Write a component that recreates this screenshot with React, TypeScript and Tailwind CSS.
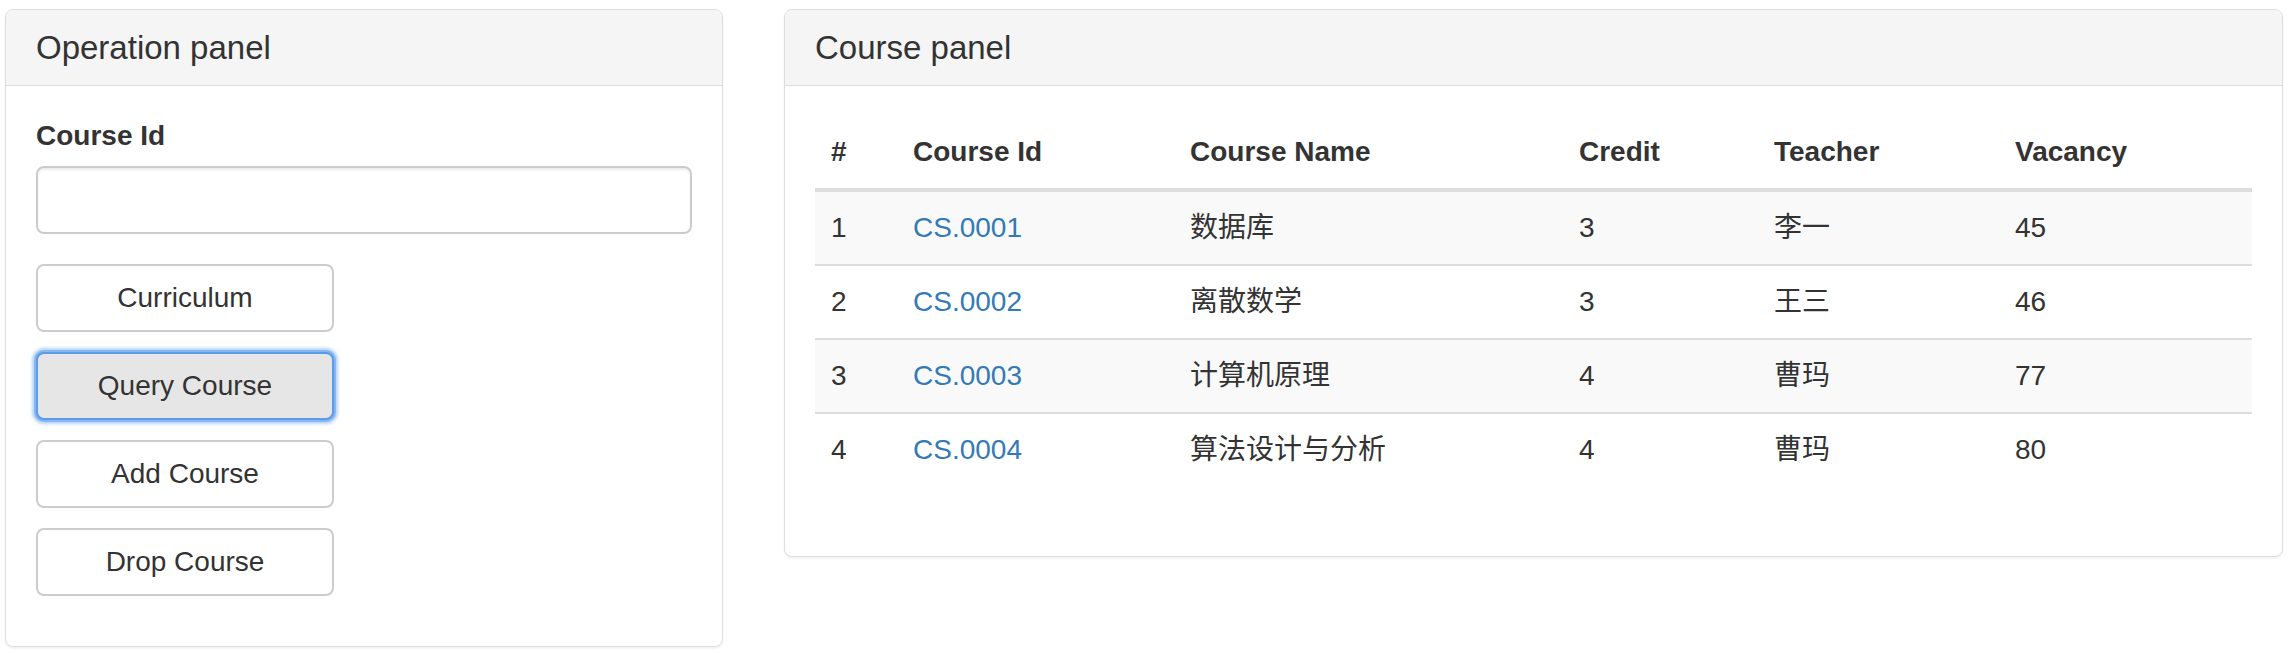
import React from "react";

type Course = {
    id: string;
    name: string;
    credit: number;
    teacher: string;
    vacancy: number;
};

const courses: Course[] = [
    { id: "CS.0001", name: "数据库", credit: 3, teacher: "李一", vacancy: 45 },
    { id: "CS.0002", name: "离散数学", credit: 3, teacher: "王三", vacancy: 46 },
    { id: "CS.0003", name: "计算机原理", credit: 4, teacher: "曹玛", vacancy: 77 },
    { id: "CS.0004", name: "算法设计与分析", credit: 4, teacher: "曹玛", vacancy: 80 },
];

const actions = ["Curriculum", "Query Course", "Add Course", "Drop Course"];

function Panel({ title, className, children }: { title: string; className: string; children: React.ReactNode }) {
    return (
        <div className={`bg-white border border-[#ddd] rounded-[8px] shadow-[0_2px_2px_rgba(0,0,0,0.05)] ${className}`}>
            <div className="bg-[#f5f5f5] border-b border-[#ddd] rounded-t-[7px] px-[30px] py-5">
                <h3 className="text-[33px] leading-[35px] font-normal text-[#333]">{title}</h3>
            </div>
            <div className="p-[30px]">{children}</div>
        </div>
    );
}

export default function App() {
    return (
        <div
            className="flex items-start gap-[61px] pl-[5px] pt-[9px] bg-white min-h-[654px] text-[#333] text-[28px] leading-[40px]"
            style={{ fontFamily: '"Liberation Sans", Arial, "Noto Sans CJK SC", sans-serif' }}
        >
            <Panel title="Operation panel" className="w-[718px] shrink-0">
                <div className="mb-[30px]">
                    <label className="block font-bold mb-[10px]">Course Id</label>
                    <input
                        type="text"
                        className="block w-full h-[68px] px-6 border-2 border-[#ccc] rounded-[8px] shadow-[inset_0_2px_2px_rgba(0,0,0,0.075)] outline-none"
                    />
                </div>
                <div className="flex flex-col items-start gap-5 mb-5">
                    {actions.map(action =>
                        action === "Query Course" ? (
                            <button
                                key={action}
                                className="w-[298px] h-[68px] bg-[#e6e6e6] border-2 border-[#5b9be9] rounded-[8px] shadow-[0_0_0_2px_#86b7f0,0_0_3px_4px_rgba(120,175,240,0.55)] text-[#333]"
                            >
                                {action}
                            </button>
                        ) : (
                            <button
                                key={action}
                                className="w-[298px] h-[68px] bg-white border-2 border-[#ccc] rounded-[8px] text-[#333]"
                            >
                                {action}
                            </button>
                        )
                    )}
                </div>
            </Panel>

            <Panel title="Course panel" className="w-[1499px] shrink-0">
                <table className="w-full table-fixed border-collapse mb-10">
                    <colgroup>
                        <col className="w-[82px]" />
                        <col className="w-[277px]" />
                        <col className="w-[389px]" />
                        <col className="w-[195px]" />
                        <col className="w-[241px]" />
                        <col />
                    </colgroup>
                    <thead>
                        <tr>
                            {["#", "Course Id", "Course Name", "Credit", "Teacher", "Vacancy"].map(h => (
                                <th key={h} className="text-left font-bold p-4 border-b-4 border-[#ddd]">
                                    {h}
                                </th>
                            ))}
                        </tr>
                    </thead>
                    <tbody>
                        {courses.map((c, i) => (
                            <tr key={c.id} className={i % 2 === 0 ? "bg-[#f9f9f9]" : "bg-white"}>
                                <td className="p-4 border-t-2 border-[#ddd]">{i + 1}</td>
                                <td className="p-4 border-t-2 border-[#ddd]">
                                    <a className="text-[#337ab7]">{c.id}</a>
                                </td>
                                <td className="p-4 border-t-2 border-[#ddd]">{c.name}</td>
                                <td className="p-4 border-t-2 border-[#ddd]">{c.credit}</td>
                                <td className="p-4 border-t-2 border-[#ddd]">{c.teacher}</td>
                                <td className="p-4 border-t-2 border-[#ddd]">{c.vacancy}</td>
                            </tr>
                        ))}
                    </tbody>
                </table>
            </Panel>
        </div>
    );
}
